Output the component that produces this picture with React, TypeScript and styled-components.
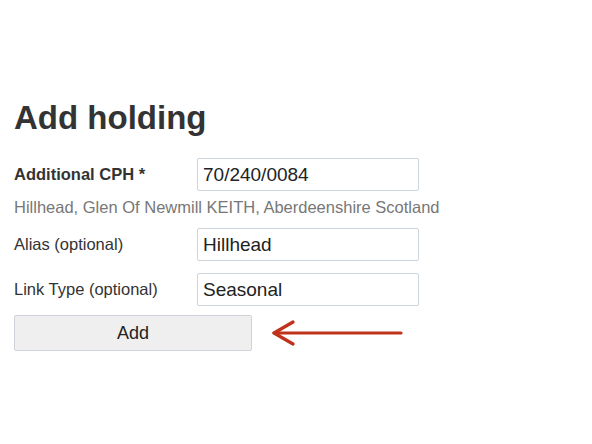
import React from "react";
import styled, { createGlobalStyle } from "styled-components";

const Global = createGlobalStyle`
  html, body { margin: 0; padding: 0; background: #fff; }
  body { font-family: "Liberation Sans", Arial, sans-serif; color: #333; }
`;

const Page = styled.div`
  padding: 98px 14px 0 14px;
`;

const Title = styled.h1`
  margin: 0 0 20px 0;
  font-size: 33px;
  font-weight: bold;
  line-height: 40px;
  color: #333;
`;

const Row = styled.div<{ $mb?: number }>`
  display: grid;
  grid-template-columns: 183px 222px;
  align-items: center;
  margin-bottom: ${(p) => p.$mb ?? 12}px;
`;

const Label = styled.label<{ $bold?: boolean }>`
  font-size: 16.5px;
  font-weight: ${(p) => (p.$bold ? "bold" : "normal")};
  color: #333;
`;

const Input = styled.input`
  box-sizing: border-box;
  width: 222px;
  height: 33px;
  padding: 0 5px;
  border: 1px solid #ccd4dc;
  border-radius: 2px;
  font-family: "Liberation Sans", Arial, sans-serif;
  font-size: 19px;
  color: #222;
  background: #fff;
  outline: none;
`;

const Hint = styled.div`
  font-size: 16.5px;
  color: #777;
  margin: 0 0 12px 0;
  line-height: 18px;
`;

const Actions = styled.div`
  display: flex;
  align-items: center;
  gap: 20px;
  margin-top: -3px;
`;

const Button = styled.button`
  box-sizing: border-box;
  width: 238px;
  height: 36px;
  border: 1px solid #cdd3d8;
  border-radius: 2px;
  background: #efefef;
  font-family: "Liberation Sans", Arial, sans-serif;
  font-size: 18px;
  color: #222;
`;

const Arrow = () => (
  <svg width="134" height="28" viewBox="0 0 134 28">
    <g stroke="#c0321c" strokeWidth="3.2" strokeLinecap="round" strokeLinejoin="round" fill="none">
      <line x1="2" y1="14" x2="129" y2="14" />
      <polyline points="21,3 2,14 21,25" />
    </g>
  </svg>
);

export default function App() {
  return (
    <>
      <Global />
      <Page>
        <Title>Add holding</Title>
        <Row $mb={7}>
          <Label $bold>Additional CPH *</Label>
          <Input defaultValue="70/240/0084" />
        </Row>
        <Hint>Hillhead, Glen Of Newmill KEITH, Aberdeenshire Scotland</Hint>
        <Row>
          <Label>Alias (optional)</Label>
          <Input defaultValue="Hillhead" />
        </Row>
        <Row>
          <Label>Link Type (optional)</Label>
          <Input defaultValue="Seasonal" />
        </Row>
        <Actions>
          <Button>Add</Button>
          <Arrow />
        </Actions>
      </Page>
    </>
  );
}
